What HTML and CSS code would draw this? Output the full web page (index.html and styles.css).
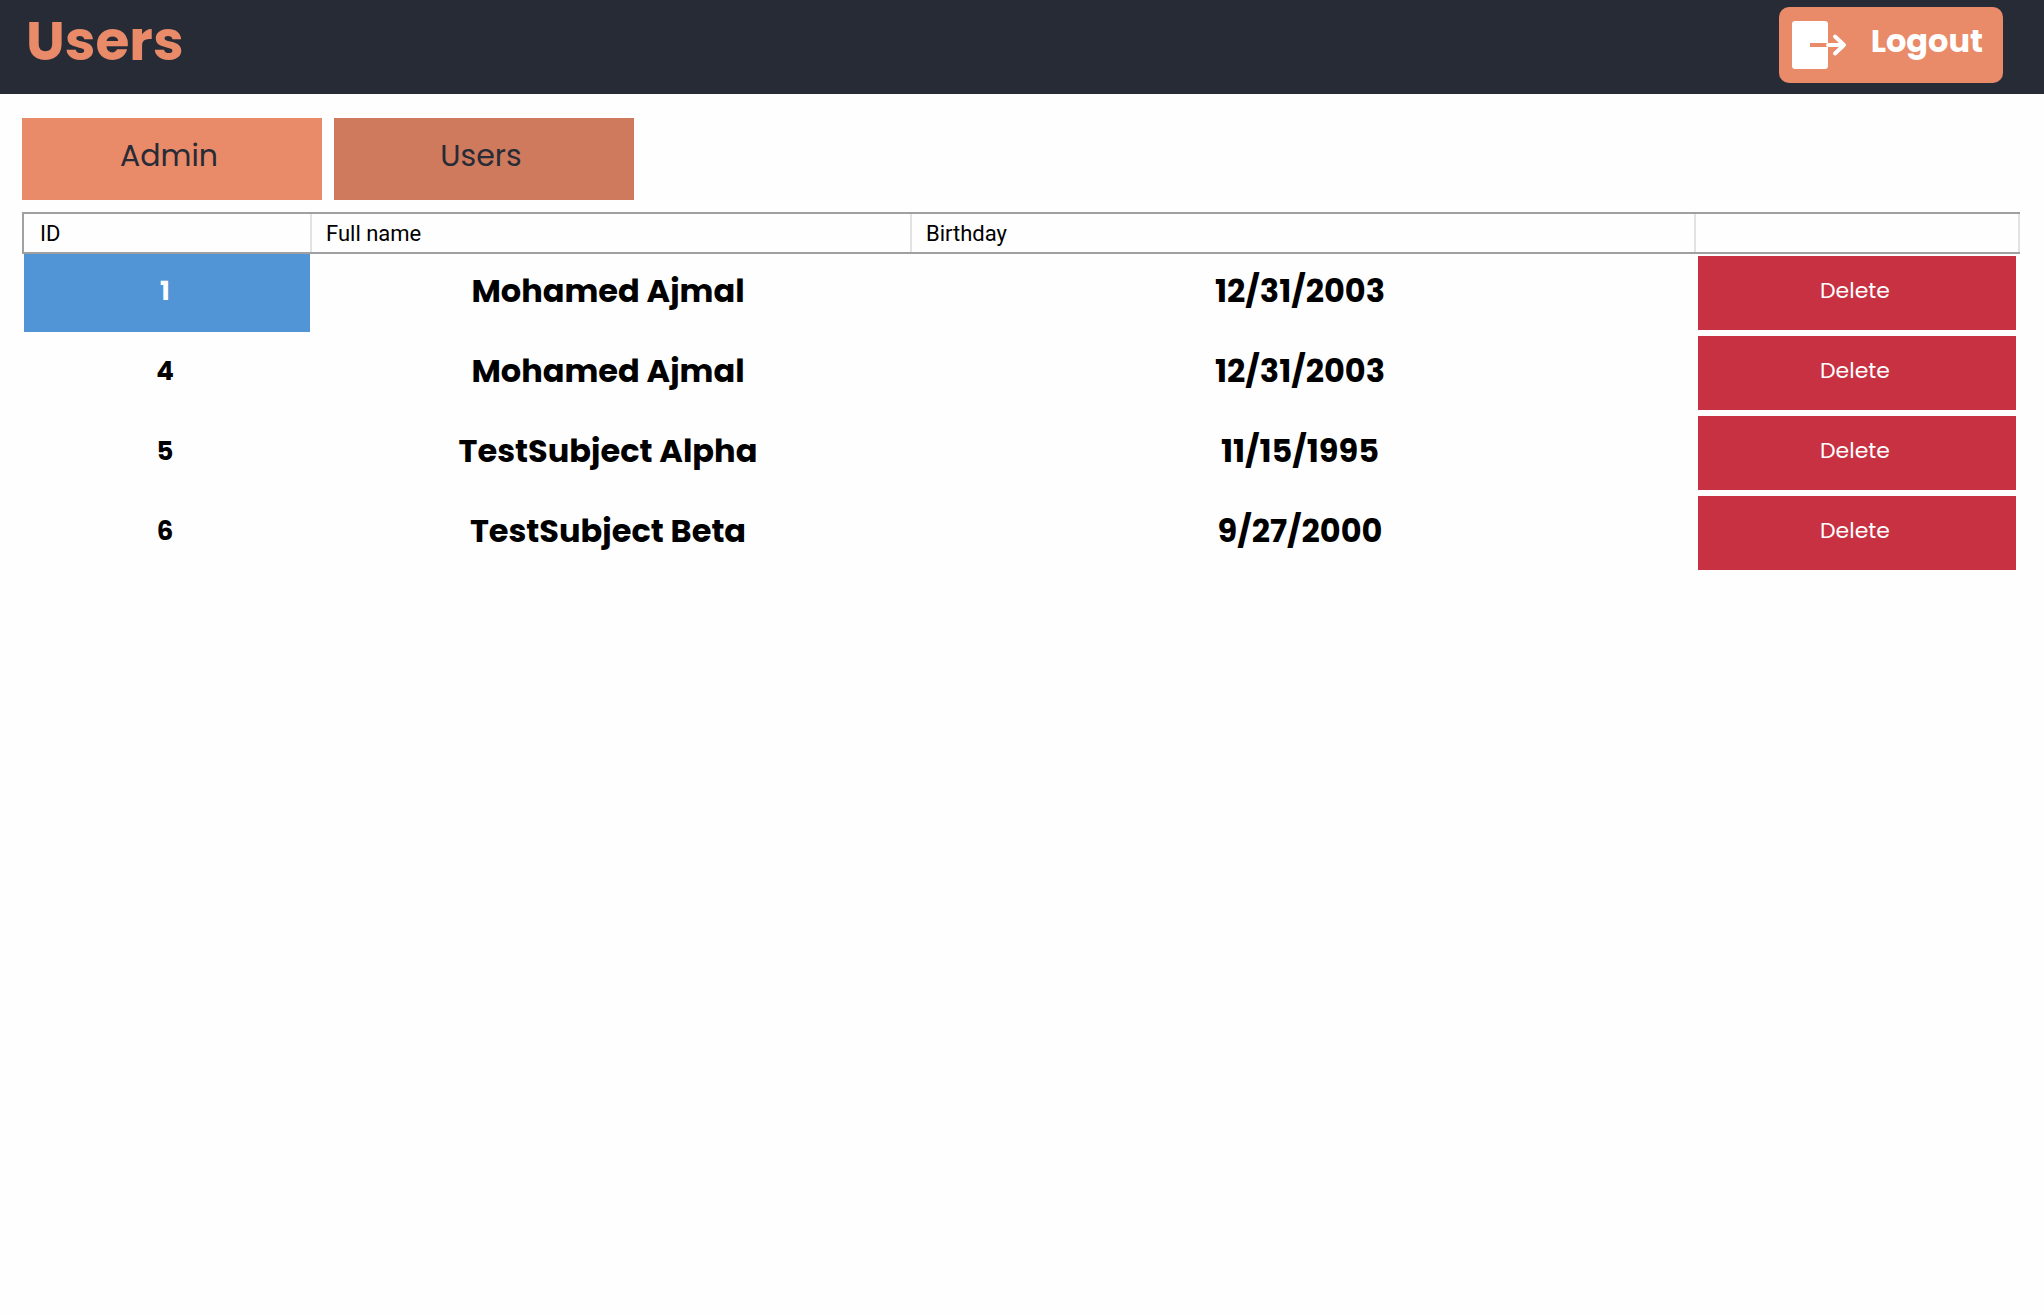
FILE: index.html
```html
<!DOCTYPE html>
<html lang="en">
<head>
  <meta charset="utf-8">
  <meta name="viewport" content="width=device-width, initial-scale=1">
  <title>Users</title>
  <link rel="stylesheet" href="styles.css">
</head>
<body>
  <header class="topbar">
    <h1 class="title">Users</h1>
    <button class="logout" type="button">
      <svg class="logout-icon" width="56" height="50" viewBox="0 0 56 50" aria-hidden="true">
        <rect class="door" x="1" y="1" width="36" height="48" rx="3"/>
        <path class="shaft" d="M19 25H37"/>
        <path class="arrow" d="M37 25H53M44 16.500L53 25L44 33.500"/>
      </svg>
      <span class="logout-label">Logout</span>
    </button>
  </header>
  <main class="content">
    <nav class="tabs" aria-label="Account type">
      <button class="tab" type="button">Admin</button>
      <button class="tab tab-active" type="button" aria-current="page">Users</button>
    </nav>
    <table class="users">
      <colgroup>
        <col class="col-id">
        <col class="col-name">
        <col class="col-birthday">
        <col class="col-action">
      </colgroup>
      <thead>
        <tr><th scope="col">ID</th><th scope="col">Full name</th><th scope="col">Birthday</th><th scope="col" aria-label="Actions"></th></tr>
      </thead>
      <tbody>
        <tr><td class="id selected">1</td><td>Mohamed Ajmal</td><td>12/31/2003</td><td class="action"><button class="delete" type="button">Delete</button></td></tr>
        <tr><td class="id">4</td><td>Mohamed Ajmal</td><td>12/31/2003</td><td class="action"><button class="delete" type="button">Delete</button></td></tr>
        <tr><td class="id">5</td><td>TestSubject Alpha</td><td>11/15/1995</td><td class="action"><button class="delete" type="button">Delete</button></td></tr>
        <tr><td class="id">6</td><td>TestSubject Beta</td><td>9/27/2000</td><td class="action"><button class="delete" type="button">Delete</button></td></tr>
      </tbody>
    </table>
  </main>
</body>
</html>
```
FILE: styles.css
```css
* {
  box-sizing: border-box;
}

body {
  margin: 0;
  background: #fefefe;
  color: #000;
  font-family: Poppins, Inter, sans-serif;
}

button {
  border: 0;
  font-family: inherit;
  cursor: pointer;
}

.topbar {
  display: flex;
  justify-content: space-between;
  align-items: center;
  height: 94px;
  padding: 0 41px 4px 26px;
  background: #262b36;
}

.title {
  margin: 0;
  padding-bottom: 8px;
  color: #e98a69;
  font-size: 55px;
  line-height: 64px;
  font-weight: 700;
}

.logout {
  display: flex;
  align-items: center;
  gap: 24px;
  height: 76px;
  padding: 0 20px 0 12px;
  border-radius: 10px;
  background: #e98a69;
  color: #fff;
  font-size: 32px;
  line-height: 40px;
  font-weight: 700;
}

.logout-label {
  padding-bottom: 8px;
}

.door {
  fill: #fff;
}

.shaft,
.arrow {
  fill: none;
  stroke: #fff;
  stroke-width: 4;
  stroke-linecap: round;
  stroke-linejoin: round;
}

.shaft {
  stroke: #e98a69;
  stroke-linecap: butt;
}

.content {
  padding: 24px 24px 24px 22px;
}

.tabs {
  display: flex;
  gap: 12px;
  margin-bottom: 12px;
}

.tab {
  width: 300px;
  height: 82px;
  padding: 0 6px 6px 0;
  background: #e98a69;
  color: #262b36;
  font-size: 30px;
  font-weight: 400;
}

.tab-active {
  background: #cf7a5d;
}

.users {
  width: 100%;
  table-layout: fixed;
  border-collapse: separate;
  border-spacing: 0;
}

.col-id {
  width: 290px;
}

.col-name {
  width: 600px;
}

.col-action {
  width: 324px;
}

.users th {
  height: 42px;
  padding: 2px 0 0 14px;
  border-top: 2px solid #a0a0a0;
  border-bottom: 2px solid #a0a0a0;
  background: linear-gradient(#e2e2e2, #e2e2e2) right / 2px 100% no-repeat;
  font-family: Roboto, sans-serif;
  font-size: 22px;
  line-height: 30px;
  font-weight: 400;
  text-align: left;
}

.users th:first-child {
  padding-left: 16px;
  border-left: 2px solid #a0a0a0;
}

.users td {
  height: 80px;
  padding: 0 6px 4px 0;
  border-right: 2px solid transparent;
  border-bottom: 2px solid transparent;
  background-clip: padding-box;
  font-size: 32px;
  line-height: 40px;
  font-weight: 700;
  text-align: center;
}

.users .id {
  padding-right: 4px;
  border-left: 2px solid transparent;
  font-size: 26px;
}

.users .selected {
  background-color: #5195d6;
  color: #fff;
}

.users .action {
  padding: 2px;
  line-height: 0;
}

.delete {
  width: 100%;
  height: 74px;
  padding: 0 4px 6px 0;
  background: #c83141;
  color: #fff;
  font-size: 22px;
  font-weight: 400;
}
```
